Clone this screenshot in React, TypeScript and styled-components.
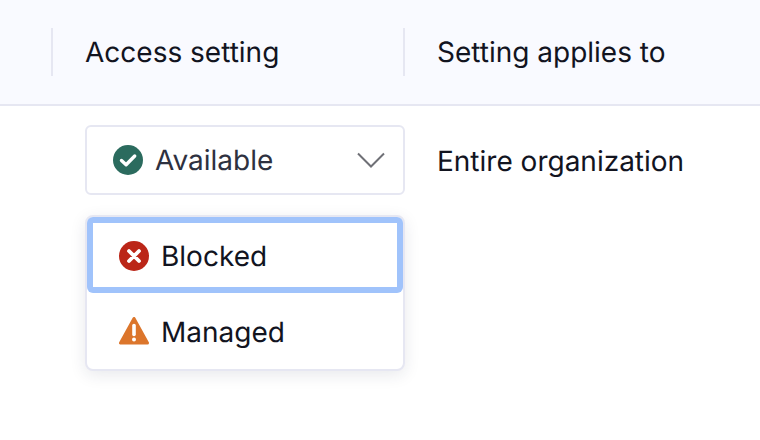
import React from "react";
import styled, { createGlobalStyle } from "styled-components";

const Global = createGlobalStyle`
  html, body { margin: 0; padding: 0; background: #fff; }
  body { width: 760px; height: 440px; overflow: hidden; font-family: Inter, "Liberation Sans", sans-serif; font-size: 28px; color: #12141f; text-rendering: geometricPrecision; }
`;
const Page = styled.div`width: 760px; height: 440px; background: #fff; overflow: hidden;`;
const Header = styled.div`
  display: flex; align-items: center; height: 104px; padding-left: 51px;
  background: #f9faff; border-bottom: 2px solid #e6e7f2;
`;
const HeaderCell = styled.div`
  width: 350px; height: 48px; flex: none; display: flex; align-items: center; padding-left: 32px;
  border-left: 2px solid #e6e7f2; margin-right: -32px; white-space: nowrap; color: #12141f;
`;
const Row = styled.div`display: flex; padding: 19px 0 0 85px; align-items: flex-start;`;
const SelectWrap = styled.div`position: relative; width: 320px; flex: none;`;
const SelectBox = styled.div`
  box-sizing: border-box; width: 320px; height: 70px; border: 2px solid #e6e7f2; border-radius: 6px; background: #fff;
  display: flex; align-items: center; padding: 0 18px 0 26px; gap: 12px; color: #2e3140;
`;
const Chevron = styled.svg`margin-left: auto; flex: none;`;
const Menu = styled.div`
  position: absolute; top: 90px; left: 0; width: 320px; box-sizing: border-box; background: #fff;
  border: 2px solid #e6e7f2; border-radius: 8px; box-shadow: 0 4px 16px rgba(30, 35, 70, 0.1);
`;
const Item = styled.div<{ $focused?: boolean }>`
  box-sizing: border-box; height: 76px; display: flex; align-items: center; gap: 12px; padding-left: 32px;
  color: #12141f; border-radius: 6px;
  box-shadow: ${(p) => (p.$focused ? "inset 0 0 0 6px #a0c3fb" : "none")};
`;
const ItemLabel = styled.span`padding-top: 2px;`;
const CrossIcon = styled.svg`margin-top: 2px; flex: none;`;
const Value = styled.div`margin-left: 32px; height: 70px; display: flex; align-items: center; color: #12141f; white-space: nowrap; padding-top: 2px; box-sizing: border-box;`;

const Check = () => (
  <svg width="30" height="30" viewBox="0 0 30 30" aria-hidden>
    <circle cx="15" cy="15" r="15" fill="#2b6b5e" />
    <path d="M8.5 15.5l4.6 4.2 8.6-8.7" fill="none" stroke="#fff" strokeWidth="3.4" strokeLinecap="round" strokeLinejoin="round" />
  </svg>
);
const Cross = () => (
  <CrossIcon width="30" height="30" viewBox="0 0 30 30" aria-hidden>
    <circle cx="15" cy="15" r="15" fill="#bb2618" />
    <path d="M10 10l10 10M20 10L10 20" fill="none" stroke="#fff" strokeWidth="3.8" strokeLinecap="round" />
  </CrossIcon>
);
const Warn = () => (
  <svg width="30" height="28" viewBox="0 0 30 28" aria-hidden>
    <path d="M15 1.5L1.5 26h27z" fill="#dc762c" stroke="#dc762c" strokeWidth="3" strokeLinejoin="round" />
    <path d="M15 8.5v9" stroke="#fff" strokeWidth="3.6" strokeLinecap="round" />
    <circle cx="15" cy="22.4" r="2" fill="#fff" />
  </svg>
);

export default function App() {
  return (
    <Page>
      <Global />
      <Header>
        <HeaderCell>Access setting</HeaderCell>
        <HeaderCell>Setting applies to</HeaderCell>
      </Header>
      <Row>
        <SelectWrap>
          <SelectBox>
            <Check />
            Available
            <Chevron width="28" height="16" viewBox="0 0 28 16" aria-hidden>
              <path d="M1 1.5l13 13 13-13" fill="none" stroke="#6f7076" strokeWidth="2" />
            </Chevron>
          </SelectBox>
          <Menu>
            <Item $focused><Cross /><ItemLabel>Blocked</ItemLabel></Item>
            <Item><Warn /><ItemLabel>Managed</ItemLabel></Item>
          </Menu>
        </SelectWrap>
        <Value>Entire organization</Value>
      </Row>
    </Page>
  );
}
